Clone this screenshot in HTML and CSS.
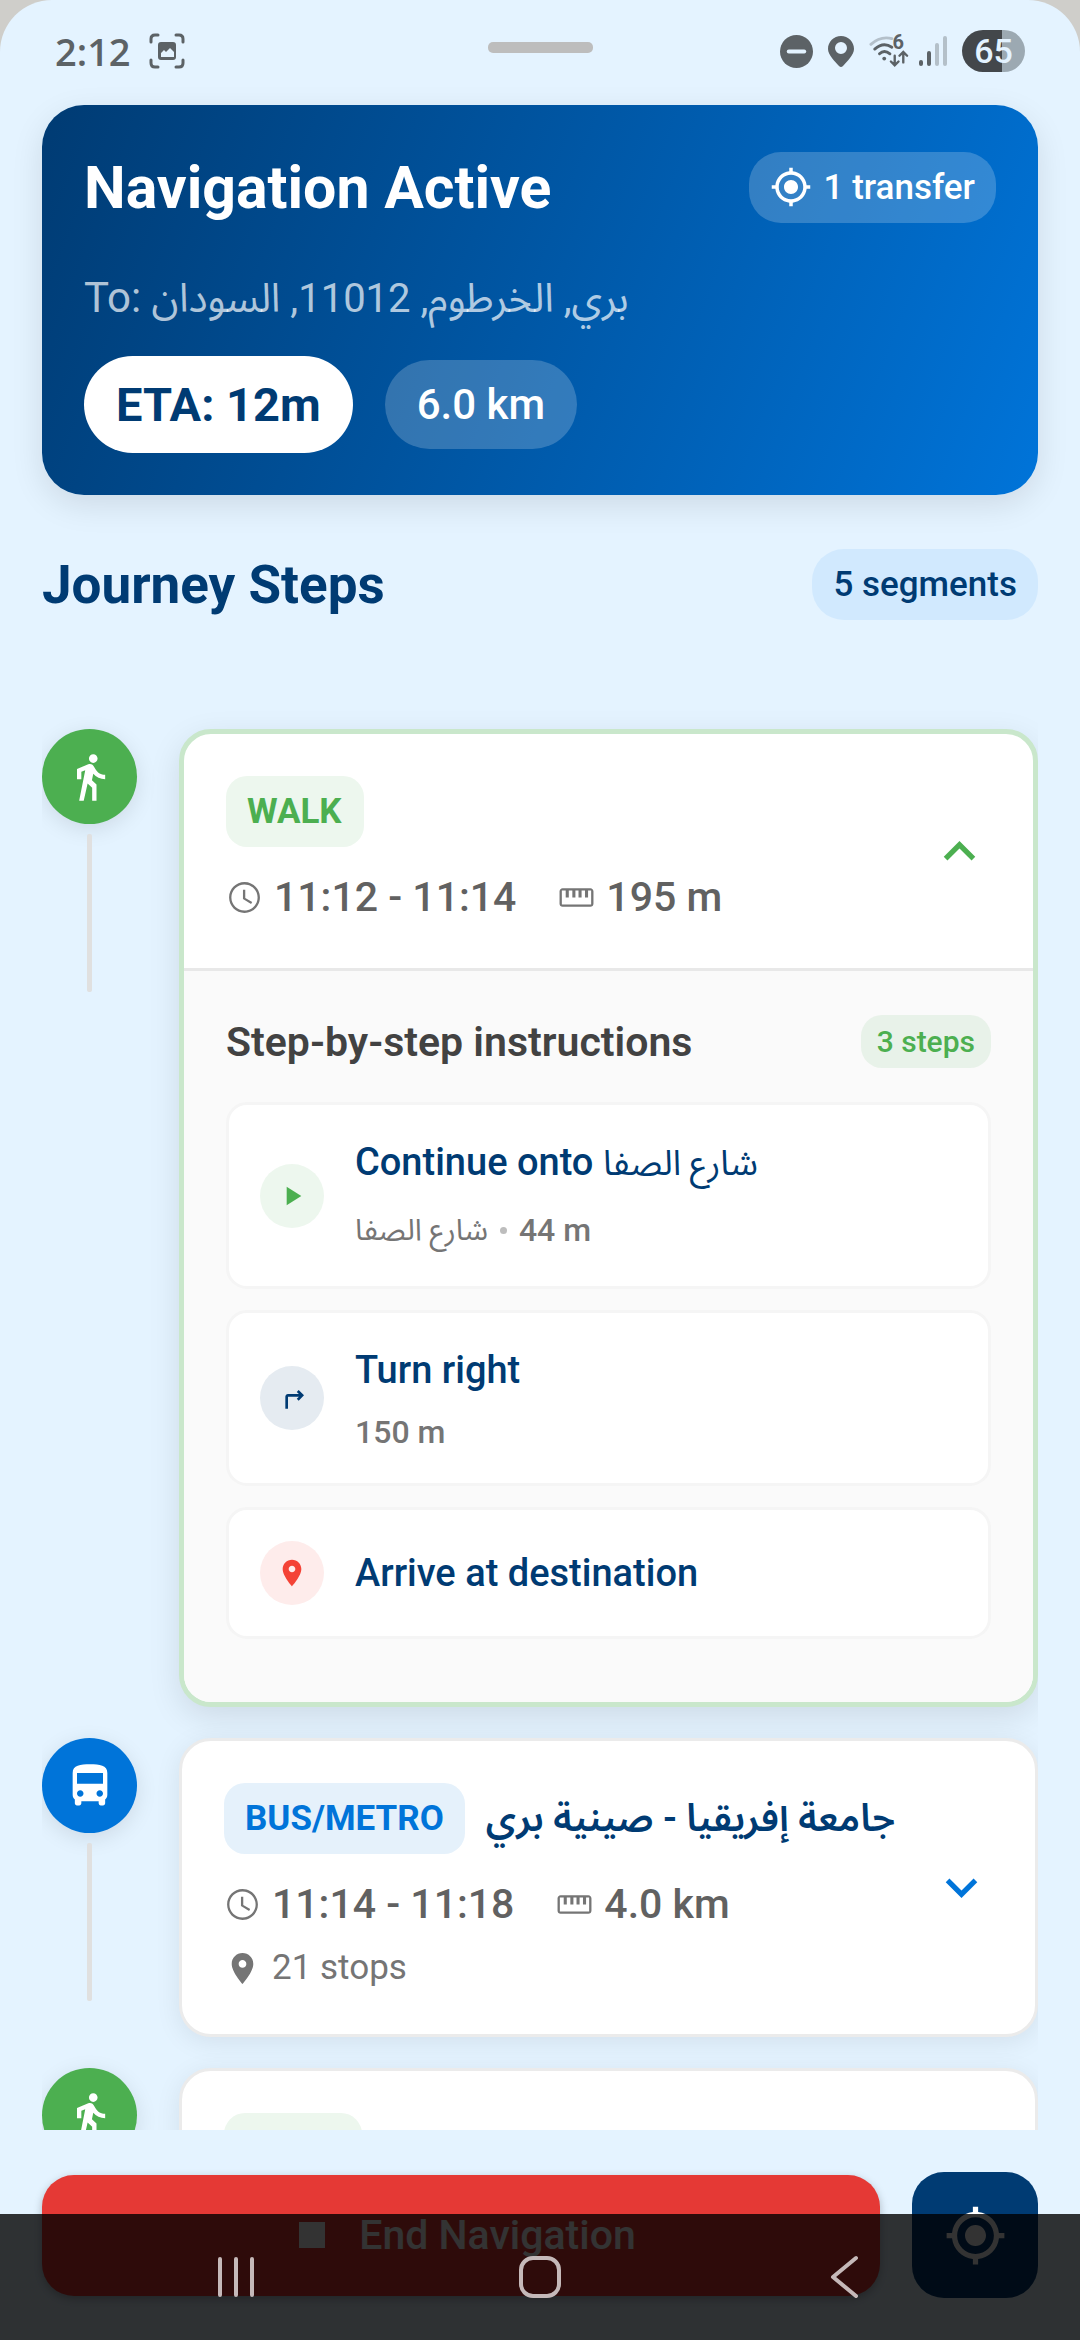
FILE: index.html
```html
<!DOCTYPE html>
<html lang="en">
<head>
    <meta charset="UTF-8">
    <meta name="viewport" content="width=device-width, initial-scale=1.0">
    <title>Navigation Active</title>
    <link rel="stylesheet" href="styles.css">
</head>
<body>
    <!-- Shared icons -->
    <svg class="icon-defs" aria-hidden="true">
        <symbol id="icon-gps" viewBox="0 0 24 24">
            <path d="M12 8c-2.21 0-4 1.79-4 4s1.79 4 4 4 4-1.79 4-4-1.79-4-4-4zm8.94 3c-.46-4.17-3.77-7.48-7.94-7.94V1h-2v2.06C6.83 3.52 3.52 6.83 3.06 11H1v2h2.06c.46 4.17 3.77 7.48 7.94 7.94V23h2v-2.06c4.17-.46 7.48-3.77 7.94-7.94H23v-2h-2.06zM12 19c-3.87 0-7-3.13-7-7s3.13-7 7-7 7 3.13 7 7-3.13 7-7 7z"/>
        </symbol>
        <symbol id="icon-walk" viewBox="0 0 24 24">
            <path d="M13.5 5.5c1.1 0 2-.9 2-2s-.9-2-2-2-2 .9-2 2 .9 2 2 2zM9.8 8.9L7 23h2.1l1.8-8 2.1 2v6h2v-7.5l-2.1-2 .6-3C14.8 12 16.8 13 19 13v-2c-1.9 0-3.5-1-4.3-2.4l-1-1.6c-.4-.6-1-1-1.7-1-.3 0-.5.1-.8.1L6 8.3V13h2V9.6l1.8-.7"/>
        </symbol>
        <symbol id="icon-bus" viewBox="0 0 24 24">
            <path d="M4 16c0 .88.39 1.67 1 2.22V20c0 .55.45 1 1 1h1c.55 0 1-.45 1-1v-1h8v1c0 .55.45 1 1 1h1c.55 0 1-.45 1-1v-1.78c.61-.55 1-1.34 1-2.22V6c0-3.5-3.58-4-8-4s-8 .5-8 4v10zm3.5 1c-.83 0-1.5-.67-1.5-1.5S6.67 14 7.5 14s1.5.67 1.5 1.5S8.33 17 7.5 17zm9 0c-.83 0-1.5-.67-1.5-1.5s.67-1.5 1.5-1.5 1.5.67 1.5 1.5-.67 1.5-1.5 1.5zm1.5-6H6V6h12v5z"/>
        </symbol>
        <symbol id="icon-clock" viewBox="0 0 24 24">
            <path d="M11.99 2C6.47 2 2 6.48 2 12s4.47 10 9.99 10C17.52 22 22 17.52 22 12S17.52 2 11.99 2zM12 20.5c-4.7 0-8.5-3.8-8.5-8.5S7.3 3.5 12 3.5s8.5 3.8 8.5 8.5-3.8 8.5-8.5 8.5zm.5-13.5H11v6l5.25 3.15.75-1.23-4.5-2.67z"/>
        </symbol>
        <symbol id="icon-ruler" viewBox="0 0 24 24">
            <path d="M21 6H3c-1.1 0-2 .9-2 2v8c0 1.1.9 2 2 2h18c1.1 0 2-.9 2-2V8c0-1.1-.9-2-2-2zm.5 10.5h-19v-9H5V12h2V7.5h2.3V12h2V7.5h2V12h2V7.5h2.2V12h2V7.5h2v9z"/>
        </symbol>
        <symbol id="icon-pin" viewBox="0 0 24 24">
            <path d="M12 2C8.13 2 5 5.13 5 9c0 5.25 7 13 7 13s7-7.75 7-13c0-3.87-3.13-7-7-7zm0 9.5c-1.38 0-2.5-1.12-2.5-2.5s1.12-2.5 2.5-2.5 2.5 1.12 2.5 2.5-1.12 2.5-2.5 2.5z"/>
        </symbol>
    </svg>

    <div class="status-bar">
        <div class="status-left">
            <span class="status-time">2:12</span>
            <svg class="status-capture" viewBox="0 0 36 36" fill="none" stroke="currentColor" stroke-width="3" stroke-linecap="round">
                <path d="M2 9V6q0-4 4-4h3M27 2h3q4 0 4 4v3M34 27v3q0 4-4 4h-3M9 34H6q-4 0-4-4v-3"/>
                <path d="M12 9h12q3 0 3 3v12q0 3-3 3H12q-3 0-3-3V12q0-3 3-3zM12 24h13v-5l-4-4-4 4-2-2-3 3z" fill="currentColor" fill-rule="evenodd" stroke="none"/>
            </svg>
        </div>
        <div class="status-right">
            <svg class="status-dnd" viewBox="0 0 34 34">
                <circle cx="17" cy="17" r="17" fill="currentColor"/>
                <path d="M9 17h16" stroke="#e4f3ff" stroke-width="4" stroke-linecap="round"/>
            </svg>
            <svg class="status-pin" viewBox="0 0 26 31">
                <path d="M13 0C5.8 0 0 5.8 0 13c0 6 7 12.5 11 17q2 2 4 0c4-4.5 11-11 11-17C26 5.8 20.2 0 13 0zm0 18a6 6 0 1 1 0-12 6 6 0 0 1 0 12z" fill="currentColor" fill-rule="evenodd"/>
            </svg>
            <div class="network">
                <div class="wifi">
                    <svg class="wifi-icon" viewBox="0 0 42 32" fill="none" stroke="currentColor" stroke-width="3" stroke-linecap="round">
                        <path d="M2 9Q12 0 24 3" opacity=".35"/>
                        <path d="M6 14q9-8 18-2M11 19q5-5 11 0"/>
                        <circle cx="16" cy="24" r="2" fill="currentColor" stroke="none"/>
                        <path d="M27 21v9M23 27l4 4 4-4M36 28v-10M32 21l4-4 4 4" stroke-width="2.5"/>
                    </svg>
                    <span class="wifi-gen">6</span>
                </div>
                <svg class="status-signal" viewBox="0 0 28 30" stroke="currentColor" stroke-width="4" stroke-linecap="round">
                    <path d="M2 26v2M10 17v11"/>
                    <path d="M18 9v19M26 2v26" opacity=".35"/>
                </svg>
            </div>
            <span class="battery">65</span>
        </div>
    </div>

    <main class="sheet">
        <div class="drag-handle"></div>

        <section class="nav-card">
            <div class="nav-card-top">
                <h1>Navigation Active</h1>
                <span class="transfer-chip">
                    <svg><use href="#icon-gps"/></svg>
                    1 transfer
                </span>
            </div>
            <p class="destination">To: <span lang="ar">بري, الخرطوم, 11012, السودان</span></p>
            <div class="nav-card-stats">
                <span class="eta">ETA: 12m</span>
                <span class="distance">6.0 km</span>
            </div>
        </section>

        <div class="journey-header">
            <h2>Journey Steps</h2>
            <span class="segment-count">5 segments</span>
        </div>

        <div class="journey-list">
            <div class="journey-row">
                <div class="timeline">
                    <span class="timeline-dot walk"><svg><use href="#icon-walk"/></svg></span>
                    <span class="timeline-line"></span>
                </div>
                <article class="step-card expanded">
                    <div class="step-header">
                        <div class="step-info">
                            <div class="step-title"><span class="mode walk">WALK</span></div>
                            <div class="step-meta">
                                <span class="meta-item"><svg><use href="#icon-clock"/></svg>11:12 - 11:14</span>
                                <span class="meta-item"><svg><use href="#icon-ruler"/></svg>195 m</span>
                            </div>
                        </div>
                        <button class="toggle walk" type="button" aria-label="Collapse">
                            <svg viewBox="0 0 24 24"><path d="M12 8l-6 6 1.41 1.41L12 10.83l4.59 4.58L18 14z"/></svg>
                        </button>
                    </div>
                    <div class="instructions">
                        <div class="instructions-header">
                            <h3>Step-by-step instructions</h3>
                            <span class="step-count">3 steps</span>
                        </div>
                        <ul>
                            <li>
                                <span class="bullet start"><svg viewBox="0 0 24 24"><path d="M8 5v14l11-7z"/></svg></span>
                                <div class="instruction-text">
                                    <p class="instruction">Continue onto <span lang="ar">شارع الصفا</span></p>
                                    <p class="detail street"><span lang="ar">شارع الصفا</span><i class="dot"></i><b>44 m</b></p>
                                </div>
                            </li>
                            <li>
                                <span class="bullet turn"><svg viewBox="0 0 24 24"><path d="M17.17 11l-1.59 1.59L17 14l4-4-4-4-1.41 1.41L17.17 9H9c-1.1 0-2 .9-2 2v9h2v-9h8.17z"/></svg></span>
                                <div class="instruction-text">
                                    <p class="instruction">Turn right</p>
                                    <p class="detail"><b>150 m</b></p>
                                </div>
                            </li>
                            <li>
                                <span class="bullet arrive"><svg><use href="#icon-pin"/></svg></span>
                                <div class="instruction-text">
                                    <p class="instruction">Arrive at destination</p>
                                </div>
                            </li>
                        </ul>
                    </div>
                </article>
            </div>

            <div class="journey-row">
                <div class="timeline">
                    <span class="timeline-dot bus"><svg><use href="#icon-bus"/></svg></span>
                    <span class="timeline-line"></span>
                </div>
                <article class="step-card">
                    <div class="step-header">
                        <div class="step-info">
                            <div class="step-title">
                                <span class="mode bus">BUS/METRO</span>
                                <span class="route" lang="ar" dir="rtl">جامعة إفريقيا - صينية بري</span>
                            </div>
                            <div class="step-meta">
                                <span class="meta-item"><svg><use href="#icon-clock"/></svg>11:14 - 11:18</span>
                                <span class="meta-item"><svg><use href="#icon-ruler"/></svg>4.0 km</span>
                            </div>
                            <div class="step-stops"><svg><use href="#icon-pin"/></svg>21 stops</div>
                        </div>
                        <button class="toggle bus" type="button" aria-label="Expand">
                            <svg viewBox="0 0 24 24"><path d="M16.59 8.59L12 13.17 7.41 8.59 6 10l6 6 6-6z"/></svg>
                        </button>
                    </div>
                </article>
            </div>

            <div class="journey-row">
                <div class="timeline">
                    <span class="timeline-dot walk"><svg><use href="#icon-walk"/></svg></span>
                </div>
                <article class="step-card">
                    <div class="step-header">
                        <div class="step-info">
                            <div class="step-title"><span class="mode walk"></span></div>
                        </div>
                    </div>
                </article>
            </div>
        </div>

        <footer class="actions">
            <button class="end-btn" type="button">
                <svg viewBox="0 0 24 24"><path d="M6 6h12v12H6z"/></svg>
                End Navigation
            </button>
            <button class="locate-btn" type="button" aria-label="My location">
                <svg><use href="#icon-gps"/></svg>
            </button>
        </footer>
    </main>

    <nav class="system-nav">
        <button type="button" aria-label="Recent apps">
            <svg viewBox="0 0 44 44"><path d="M6 4v36M22 4v36M38 4v36"/></svg>
        </button>
        <button type="button" aria-label="Home">
            <svg viewBox="0 0 44 44"><rect x="3" y="3" width="38" height="38" rx="12"/></svg>
        </button>
        <button type="button" aria-label="Back">
            <svg viewBox="0 0 44 44"><path d="M34 3L11 22l23 19"/></svg>
        </button>
    </nav>
</body>
</html>
```

FILE: styles.css
```css
:root {
    --background: #e4f3ff;
    --navy: #003b73;
    --blue: #0074d9;
    --green: #4caf50;
    --red: #e53935;
}

* {
    margin: 0;
    padding: 0;
    box-sizing: border-box;
}

body {
    position: relative;
    height: 100vh;
    overflow: hidden;
    background-color: #cfceca;
    font-family: Roboto, "Noto Sans Arabic", "DejaVu Sans", sans-serif;
    color: var(--navy);
}

button {
    border: none;
    background: none;
    font: inherit;
    cursor: pointer;
}

svg {
    display: block;
    flex-shrink: 0;
    fill: currentColor;
}

ul {
    list-style: none;
}

.icon-defs {
    position: absolute;
    width: 0;
    height: 0;
}

/* Status bar */
.status-bar {
    position: absolute;
    top: 0;
    left: 0;
    right: 0;
    height: 102px;
    padding: 0 55px;
    display: flex;
    justify-content: space-between;
    align-items: center;
    color: #5c6266;
}

.status-left,
.status-right,
.network {
    display: flex;
    align-items: center;
}

.status-left {
    gap: 18px;
}

.status-right {
    gap: 15px;
}

.network {
    gap: 10px;
}

.status-time {
    font-family: "Open Sans", "Noto Sans", sans-serif;
    font-size: 38px;
    font-weight: 600;
}

.status-capture {
    width: 36px;
    height: 36px;
    fill: none;
}

.status-dnd {
    width: 33px;
    height: 33px;
}

.status-pin {
    width: 26px;
    height: 31px;
}

.wifi {
    position: relative;
}

.wifi-icon {
    width: 40px;
    height: 32px;
    fill: none;
}

.wifi-gen {
    position: absolute;
    top: 0;
    right: 5px;
    font-size: 20px;
    font-weight: 700;
    line-height: 14px;
}

.status-signal {
    width: 28px;
    height: 30px;
}

.battery {
    width: 63px;
    height: 42px;
    border-radius: 21px;
    background: linear-gradient(90deg, #43474b 64%, #9ca9b2 64%);
    color: var(--background);
    font-size: 34px;
    font-weight: 500;
    line-height: 42px;
    text-align: center;
}

/* Bottom sheet */
.sheet {
    height: 100%;
    padding: 42px 42px 0;
    display: flex;
    flex-direction: column;
    background-color: var(--background);
    border-radius: 52px 52px 0 0;
}

.drag-handle {
    width: 105px;
    height: 11px;
    margin: 0 auto 52px;
    flex-shrink: 0;
    border-radius: 5px;
    background-color: #bdbdbd;
}

.nav-card {
    padding: 42px;
    border-radius: 42px;
    background: linear-gradient(111deg, var(--navy), var(--blue));
    box-shadow: 0 10px 32px rgba(0, 0, 0, 0.1);
    color: #fff;
}

.nav-card-top {
    height: 80px;
    display: flex;
    justify-content: space-between;
    align-items: center;
}

h1 {
    font-size: 59px;
    font-weight: 700;
}

.transfer-chip {
    height: 71px;
    padding: 0 21px;
    display: flex;
    align-items: center;
    gap: 12px;
    border-radius: 32px;
    background-color: rgba(255, 255, 255, 0.2);
    font-size: 35px;
    font-weight: 500;
}

.transfer-chip svg {
    width: 42px;
    height: 42px;
}

.destination {
    margin: 42px 0 28px;
    font-size: 42px;
    line-height: 58px;
    color: rgba(255, 255, 255, 0.7);
}

.destination span {
    font-size: 40px;
}

.nav-card-stats {
    display: flex;
    align-items: center;
    gap: 32px;
}

.eta,
.distance {
    padding: 0 32px;
    border-radius: 52px;
}

.eta {
    background-color: #fff;
    color: var(--navy);
    font-size: 47px;
    font-weight: 700;
    line-height: 97px;
}

.distance {
    background-color: rgba(255, 255, 255, 0.2);
    font-size: 42px;
    font-weight: 500;
    line-height: 89px;
}

.journey-header {
    margin-top: 54px;
    display: flex;
    justify-content: space-between;
    align-items: center;
}

h2 {
    font-size: 53px;
    font-weight: 700;
}

.segment-count {
    padding: 0 21px;
    border-radius: 32px;
    background-color: #d1e9fe;
    font-size: 35px;
    font-weight: 500;
    line-height: 71px;
}

/* Journey list */
.journey-list {
    flex: 1;
    min-height: 0;
    margin-top: 67px;
    padding-top: 42px;
    overflow: hidden;
}

.journey-row {
    display: flex;
    align-items: flex-start;
    gap: 42px;
    margin-bottom: 31px;
}

.timeline {
    display: flex;
    flex-direction: column;
    align-items: center;
    gap: 10px;
}

.timeline-dot {
    width: 95px;
    height: 95px;
    display: flex;
    justify-content: center;
    align-items: center;
    border-radius: 50%;
    box-shadow: 0 5px 21px rgba(0, 0, 0, 0.1);
    color: #fff;
}

.timeline-dot.walk {
    background-color: var(--green);
}

.timeline-dot.bus {
    background-color: var(--blue);
}

.timeline-dot svg {
    width: 52px;
    height: 52px;
}

.timeline-line {
    width: 5px;
    height: 158px;
    border-radius: 2px;
    background-color: #e0e0e0;
}

.step-card {
    flex: 1;
    min-width: 0;
    overflow: hidden;
    border: 3px solid #ebebeb;
    border-radius: 32px;
    background-color: #fff;
    box-shadow: 0 5px 26px rgba(0, 0, 0, 0.08);
}

.step-card.expanded {
    border: 5px solid #c9e7cb;
    box-shadow: 0 10px 32px rgba(0, 0, 0, 0.1);
}

.step-header {
    padding: 42px;
    display: flex;
    justify-content: space-between;
    align-items: center;
}

.step-title {
    display: flex;
    align-items: center;
    gap: 21px;
}

.mode {
    min-width: 138px;
    min-height: 71px;
    padding: 0 21px;
    border-radius: 21px;
    font-size: 35px;
    font-weight: 700;
    line-height: 71px;
}

.mode.walk {
    background-color: #edf7ee;
    color: var(--green);
}

.mode.bus {
    background-color: #e5f1fb;
    color: var(--blue);
}

.route {
    font-size: 38px;
    font-weight: 600;
    line-height: 71px;
    white-space: nowrap;
}

.step-meta {
    margin-top: 21px;
    display: flex;
    gap: 42px;
    color: #616161;
    font-size: 41px;
    font-weight: 500;
    line-height: 58px;
}

.meta-item,
.step-stops {
    display: flex;
    align-items: center;
    gap: 11px;
}

.meta-item svg,
.step-stops svg {
    width: 37px;
    height: 37px;
    color: #757575;
}

.step-stops {
    margin-top: 11px;
    color: #757575;
    font-size: 35px;
    line-height: 48px;
}

.toggle svg {
    width: 63px;
    height: 63px;
}

.toggle.walk {
    color: var(--green);
}

.toggle.bus {
    color: var(--blue);
}

/* Turn by turn instructions */
.instructions {
    padding: 42px 42px 63px;
    border-top: 3px solid #e8e8e8;
    background-color: #fafafa;
}

.instructions-header {
    height: 57px;
    margin-bottom: 32px;
    display: flex;
    justify-content: space-between;
    align-items: center;
}

h3 {
    color: #424242;
    font-size: 41px;
    font-weight: 600;
}

.step-count {
    padding: 0 16px;
    border-radius: 21px;
    background-color: #e8f2e9;
    color: var(--green);
    font-size: 30px;
    font-weight: 500;
    line-height: 53px;
}

.instructions ul {
    display: flex;
    flex-direction: column;
    gap: 21px;
}

.instructions li {
    padding: 31px;
    display: flex;
    align-items: center;
    gap: 31px;
    border: 3px solid #f5f5f5;
    border-radius: 21px;
    background-color: #fff;
}

.bullet {
    width: 64px;
    height: 64px;
    display: flex;
    justify-content: center;
    align-items: center;
    border-radius: 50%;
}

.bullet svg {
    width: 32px;
    height: 32px;
}

.bullet.start {
    background-color: #edf7ee;
    color: var(--green);
}

.bullet.turn {
    background-color: #e5ebf1;
    color: var(--navy);
}

.bullet.arrive {
    background-color: #feeceb;
    color: #f44336;
}

.instruction {
    font-size: 38px;
    font-weight: 500;
    line-height: 53px;
}

.instruction span {
    font-size: 35px;
    font-weight: 400;
}

.detail {
    margin-top: 15px;
    display: flex;
    align-items: center;
    gap: 12px;
    color: #757575;
    font-size: 32px;
    line-height: 40px;
}

.detail.street {
    line-height: 50px;
}

.detail span {
    font-size: 30px;
}

.detail b {
    font-weight: 500;
}

.dot {
    width: 7px;
    height: 7px;
    border-radius: 50%;
    background-color: #bdbdbd;
}

/* Bottom actions */
.actions {
    padding: 42px 0;
    display: flex;
    align-items: center;
    gap: 32px;
}

.end-btn {
    flex: 1;
    height: 121px;
    display: flex;
    justify-content: center;
    align-items: center;
    gap: 21px;
    border-radius: 32px;
    background-color: var(--red);
    box-shadow: 0 3px 8px rgba(0, 0, 0, 0.25);
    color: #fff;
    font-size: 41px;
    font-weight: 500;
}

.end-btn svg {
    width: 52px;
    height: 52px;
}

.locate-btn {
    width: 126px;
    height: 126px;
    display: flex;
    justify-content: center;
    align-items: center;
    border-radius: 32px;
    background-color: var(--navy);
    color: #fff;
}

.locate-btn svg {
    width: 63px;
    height: 63px;
}

/* System navigation, drawn over the sheet */
.system-nav {
    position: absolute;
    left: 0;
    right: 0;
    bottom: 0;
    height: 126px;
    padding: 0 85px;
    display: flex;
    justify-content: space-between;
    align-items: center;
    background-color: rgba(0, 0, 0, 0.8);
}

.system-nav button {
    width: 302px;
    display: flex;
    justify-content: center;
}

.system-nav svg {
    width: 44px;
    height: 44px;
    fill: none;
    stroke: #c5b9b9;
    stroke-width: 4;
    stroke-linecap: round;
    stroke-linejoin: round;
}
```
